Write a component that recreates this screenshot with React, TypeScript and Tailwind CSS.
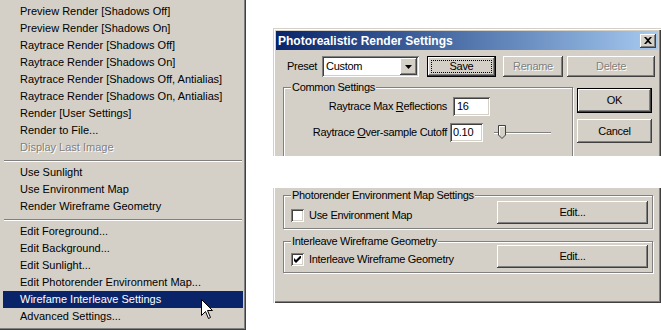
import React from "react";

const raised =
  "shadow-[inset_-1px_-1px_#404040,inset_1px_1px_#ffffff,inset_-2px_-2px_#808080]";
const defaultBtn =
  "shadow-[inset_0_0_0_1px_#000000,inset_-2px_-2px_#404040,inset_2px_2px_#ffffff,inset_-3px_-3px_#808080]";
const sunken =
  "shadow-[inset_1px_1px_#808080,inset_-1px_-1px_#ffffff,inset_2px_2px_#404040,inset_-2px_-2px_#d4d0c8]";
const disabledText = "text-[#808080] [text-shadow:1px_1px_0_#ffffff]";

function Item({
  label,
  disabled,
  active,
}: {
  label: string;
  disabled?: boolean;
  active?: boolean;
}) {
  return (
    <div
      className={`h-[17px] flex items-center pl-[17px] whitespace-nowrap ${
        active ? "bg-[#0a246a] text-white" : disabled ? disabledText : "text-black"
      }`}
    >
      {label}
    </div>
  );
}

function Sep() {
  return (
    <div className="h-[8px] pt-[4px] px-[1px]">
      <div className="h-[1px] bg-[#808080]" />
      <div className="h-[1px] bg-white" />
    </div>
  );
}

function Checkbox({ checked }: { checked?: boolean }) {
  return (
    <div className={`w-[13px] h-[13px] bg-white ${sunken} flex items-center justify-center flex-none`}>
      {checked && (
        <svg width="7" height="7" viewBox="0 0 7 7">
          <path d="M0 2 L0 5 L2 7 L7 2 L7 -1 L2 4 Z" fill="#000" />
        </svg>
      )}
    </div>
  );
}

function GroupLabel({ text }: { text: string }) {
  return (
    <div className="absolute left-[7px] top-[-7px] bg-[#d4d0c8] px-[1px] leading-[13px] whitespace-nowrap">
      {text}
    </div>
  );
}

const etched = "border border-[#808080] shadow-[inset_1px_1px_#ffffff,1px_1px_#ffffff]";

export default function App() {
  return (
    <div className="relative w-[661px] h-[330px] bg-white flex overflow-hidden font-['Liberation_Sans',Arial,sans-serif] text-[11px] leading-none">
      {/* Context menu */}
      <div className="w-[246px] h-[330px] flex-none bg-[#d4d0c8] shadow-[inset_-1px_-1px_#404040,inset_-2px_-2px_#808080] pt-[3px] pl-[3px] pr-[3px] flex flex-col">
        <Item label="Preview Render [Shadows Off]" />
        <Item label="Preview Render [Shadows On]" />
        <Item label="Raytrace Render [Shadows Off]" />
        <Item label="Raytrace Render [Shadows On]" />
        <Item label="Raytrace Render [Shadows Off, Antialias]" />
        <Item label="Raytrace Render [Shadows On, Antialias]" />
        <Item label="Render [User Settings]" />
        <Item label="Render to File..." />
        <Item label="Display Last Image" disabled />
        <Sep />
        <Item label="Use Sunlight" />
        <Item label="Use Environment Map" />
        <Item label="Render Wireframe Geometry" />
        <Sep />
        <Item label="Edit Foreground..." />
        <Item label="Edit Background..." />
        <Item label="Edit Sunlight..." />
        <Item label="Edit Photorender Environment Map..." />
        <Item label="Wirefame Interleave Settings" active />
        <Item label="Advanced Settings..." />
      </div>

      {/* Mouse cursor */}
      <svg
        className="absolute left-[201px] top-[299px]"
        width="13"
        height="21"
        viewBox="0 0 13 21"
      >
        <path
          d="M0.5 0.5 L0.5 16.5 L4.5 12.5 L7.5 19.5 L9.5 18.5 L6.5 11.5 L11.5 11.5 Z"
          fill="#ffffff"
          stroke="#000000"
          strokeWidth="1"
        />
      </svg>

      {/* Dialog pieces */}
      <div className="ml-[27px] pt-[28px] flex flex-col w-[388px] text-black tracking-[-0.3px]">
        {/* Top piece */}
        <div className="h-[128px] overflow-hidden bg-[#d4d0c8] shadow-[inset_1px_1px_#d4d0c8,inset_2px_2px_#ffffff,inset_-1px_0_#404040,inset_-2px_0_#808080] pt-[3px] px-[3px] flex flex-col flex-none">
          <div className="h-[19px] flex items-center bg-gradient-to-r from-[#0a246a] to-[#a6caf0] pl-[2px] pr-[2px] flex-none">
            <span className="text-white font-bold text-[12px] tracking-normal">Photorealistic Render Settings</span>
            <div className={`ml-auto w-[16px] h-[14px] bg-[#d4d0c8] ${raised} flex items-center justify-center`}>
              <svg width="8" height="7" viewBox="0 0 8 7">
                <path
                  d="M0 0 L2 0 L4 2 L6 0 L8 0 L5 3.5 L8 7 L6 7 L4 5 L2 7 L0 7 L3 3.5 Z"
                  fill="#000"
                />
              </svg>
            </div>
          </div>

          {/* Preset row */}
          <div className="mt-[6px] h-[21px] flex items-center flex-none">
            <div className="ml-[11px] w-[35px]">Preset</div>
            <div className={`w-[97px] h-[21px] bg-white ${sunken} flex items-center pl-[4px] pr-[2px]`}>
              <span>Custom</span>
              <div className={`ml-auto w-[17px] h-[17px] bg-[#d4d0c8] ${raised} flex items-center justify-center`}>
                <svg width="7" height="4" viewBox="0 0 7 4">
                  <path d="M0 0 L7 0 L3.5 4 Z" fill="#000" />
                </svg>
              </div>
            </div>
            <div className={`relative ml-[8px] w-[69px] h-[21px] bg-[#d4d0c8] ${defaultBtn} flex items-center justify-center`}>
              <div className="absolute inset-[4px] border border-dotted border-black" />
              <span>Save</span>
            </div>
            <div className={`ml-[7px] w-[60px] h-[21px] bg-[#d4d0c8] ${raised} flex items-center justify-center ${disabledText}`}>
              Rename
            </div>
            <div className={`ml-[4px] w-[88px] h-[21px] bg-[#d4d0c8] ${raised} flex items-center justify-center ${disabledText}`}>
              Delete
            </div>
          </div>

          {/* Common settings + OK/Cancel */}
          <div className="flex items-start">
            <div className={`relative ml-[7px] mt-[10px] w-[290px] h-[90px] ${etched} flex flex-col`}>
              <GroupLabel text="Common Settings" />
              <div className="mt-[9px] flex items-center h-[19px]">
                <div className="w-[163px] text-right whitespace-nowrap">
                  Raytrace Max <span className="underline">R</span>eflections
                </div>
                <div className={`ml-[6px] w-[37px] h-[19px] bg-white ${sunken} flex items-center pl-[4px]`}>16</div>
              </div>
              <div className="mt-[7px] flex items-center h-[19px]">
                <div className="w-[163px] text-right whitespace-nowrap">
                  Raytrace <span className="underline">O</span>ver-sample Cutoff
                </div>
                <div className={`ml-[3px] w-[33px] h-[19px] bg-white ${sunken} flex items-center pl-[3px]`}>0.10</div>
                <div className="relative ml-[11px] w-[57px] h-[19px] flex items-center">
                  <div className="w-full h-[2px] border-t border-[#808080] border-b border-b-white" />
                  <svg className="absolute left-[4px] top-[2px]" width="8" height="14" viewBox="0 0 8 14">
                    <path d="M0.5 0.5 H7.5 V10 L4 13.5 L0.5 10 Z" fill="#d4d0c8" stroke="#404040" strokeWidth="1" />
                    <path d="M1.5 10 V1.5 H6.5" fill="none" stroke="#ffffff" strokeWidth="1" />
                  </svg>
                </div>
              </div>
            </div>
            <div className="ml-[4px] mt-[11px] flex flex-col w-[75px]">
              <div className={`h-[25px] bg-[#d4d0c8] ${defaultBtn} flex items-center justify-center`}>OK</div>
              <div className={`mt-[6px] h-[24px] bg-[#d4d0c8] ${raised} flex items-center justify-center`}>Cancel</div>
            </div>
          </div>
        </div>

        {/* Lower piece */}
        <div className="mt-[32px] h-[115px] flex-none bg-[#d4d0c8] shadow-[inset_1px_0_#d4d0c8,inset_2px_0_#ffffff,inset_-1px_-1px_#404040,inset_-2px_-2px_#808080] flex flex-col">
          <div className={`relative ml-[10px] mt-[7px] w-[370px] h-[34px] ${etched} flex items-start`}>
            <GroupLabel text="Photorender Environment Map Settings" />
            <div className="ml-[7px] mt-[13px] flex items-center">
              <Checkbox />
              <span className="ml-[5px]">Use Environment Map</span>
            </div>
            <div className={`ml-auto mr-[4px] mt-[5px] w-[151px] h-[23px] bg-[#d4d0c8] ${raised} flex items-center justify-center`}>
              Edit...
            </div>
          </div>
          <div className={`relative ml-[10px] mt-[12px] w-[370px] h-[32px] ${etched} flex items-start`}>
            <GroupLabel text="Interleave Wireframe Geometry" />
            <div className="ml-[7px] mt-[11px] flex items-center">
              <Checkbox checked />
              <span className="ml-[5px]">Interleave Wireframe Geometry</span>
            </div>
            <div className={`ml-auto mr-[4px] mt-[3px] w-[151px] h-[23px] bg-[#d4d0c8] ${raised} flex items-center justify-center`}>
              Edit...
            </div>
          </div>
        </div>
      </div>
    </div>
  );
}
